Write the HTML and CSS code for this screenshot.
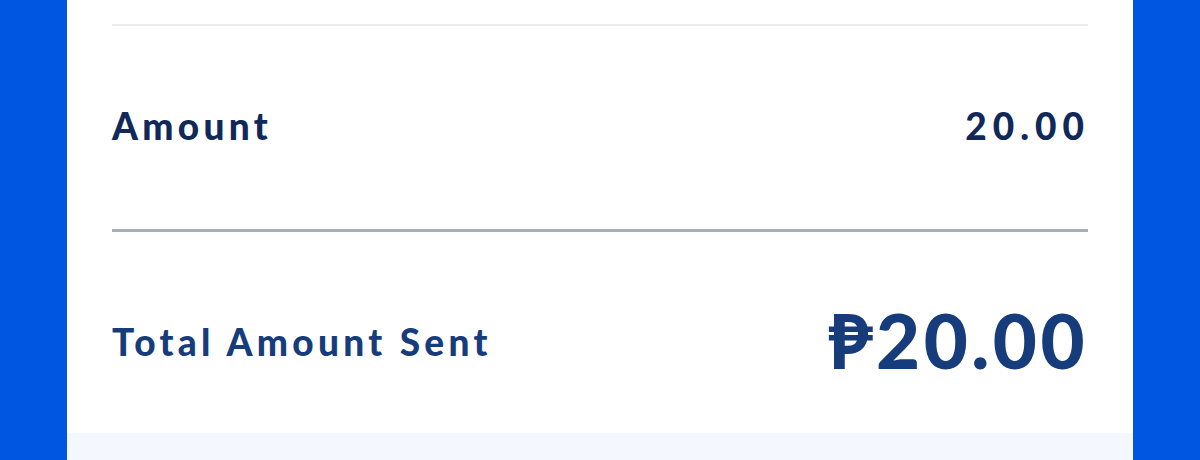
FILE: index.html
```html
<!DOCTYPE html>
<html lang="en">
<head>
    <meta charset="UTF-8">
    <meta name="viewport" content="width=device-width, initial-scale=1.0">
    <title>Transfer Receipt</title>
    <link rel="stylesheet" href="styles.css">
</head>
<body>
    <div class="card">
        <div class="details">
            <div class="row amount">
                <span class="label">Amount</span>
                <span class="value">20.00</span>
            </div>
            <div class="row total">
                <span class="label">Total Amount Sent</span>
                <span class="value big">₱20.00</span>
            </div>
        </div>
        <div class="footer"></div>
    </div>
</body>
</html>
```

FILE: styles.css
```css
html, body {
    margin: 0;
    height: 100%;
}
body {
    font-family: Lato, "DejaVu Sans", sans-serif;
    font-weight: 900;
    background-color: #0056e1;
    overflow: hidden;
}
.card {
    margin: 0 67px;
    height: 460px;
    background: white;
    display: flex;
    flex-direction: column;
}
.details {
    padding: 0 45px;
}
.row {
    display: flex;
    justify-content: space-between;
    align-items: center;
    box-sizing: border-box;
}
.row.amount {
    margin-top: 24px;
    height: 205px;
    padding-bottom: 4px;
    border-top: 2px solid #ebebeb;
    color: #10295a;
}
.row.total {
    height: 204px;
    padding-top: 14px;
    border-top: 3px solid #a6aebc;
    color: #163c7c;
}
.label {
    font-size: 37px;
    letter-spacing: 4.3px;
}
.value {
    font-size: 37px;
    letter-spacing: 6px;
    margin-right: -2px;
}
.value.big {
    font-size: 76px;
    letter-spacing: 3.5px;
    margin-right: 0;
}
.total .label {
    padding-top: 4px;
}
.footer {
    flex: 1;
    background-color: #f4f7fd;
}
```
